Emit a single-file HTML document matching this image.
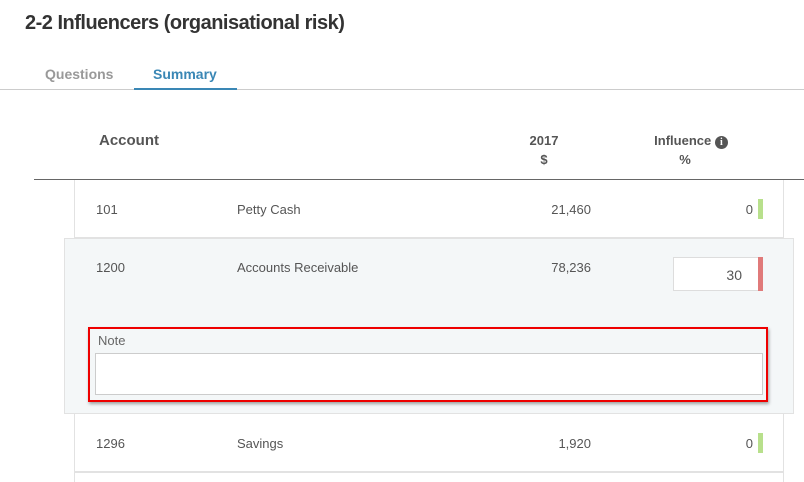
<!DOCTYPE html>
<html><head><style>
*{margin:0;padding:0;box-sizing:border-box}
body{width:804px;height:482px;overflow:hidden;background:#fff;font-family:"Liberation Sans",sans-serif;color:#555;position:relative}
.a{position:absolute}
</style></head><body>
<div class="a" style="left:25px;top:12px;font-size:20px;font-weight:bold;color:#333;letter-spacing:-0.5px">2-2 Influencers (organisational risk)</div>
<div class="a" style="left:45px;top:66px;font-size:14px;color:#999;font-weight:bold">Questions</div>
<div class="a" style="left:153px;top:66px;font-size:14px;color:#3a87b5;font-weight:bold">Summary</div>
<div class="a" style="left:0;top:89px;width:804px;height:1px;background:#ccc"></div>
<div class="a" style="left:134px;top:88px;width:103px;height:2px;background:#3a87b5"></div>
<div class="a" style="left:99px;top:132px;font-size:15px;font-weight:bold;color:#555">Account</div>
<div class="a" style="left:520px;top:131px;width:48px;text-align:center;font-size:13px;font-weight:bold;line-height:19px">2017<br>$</div>
<div class="a" style="left:646px;top:131px;width:90px;text-align:center;font-size:13px;font-weight:bold;line-height:19px">Influence <span style="display:inline-block;width:13px;height:13px;border-radius:50%;background:#555;color:#fff;font-size:10px;line-height:13px;vertical-align:0px;font-family:'Liberation Serif',serif">i</span><br><span style="margin-right:12px">%</span></div>
<div class="a" style="left:34px;top:179px;width:770px;height:1px;background:#666"></div>

<div class="a" style="left:74px;top:180px;width:710px;height:58px;border:1px solid #e2e2e2;border-top:none"></div>
<div class="a" style="left:96px;top:202px;font-size:13px">101</div>
<div class="a" style="left:237px;top:202px;font-size:13px">Petty Cash</div>
<div class="a" style="left:500px;top:202px;width:91px;text-align:right;font-size:13px">21,460</div>
<div class="a" style="left:700px;top:202px;width:53px;text-align:right;font-size:13px">0</div>
<div class="a" style="left:758px;top:199px;width:5px;height:20px;background:#b8e08c"></div>

<div class="a" style="left:64px;top:238px;width:730px;height:176px;background:#f4f7f8;border:1px solid #e2e2e2"></div>
<div class="a" style="left:96px;top:260px;font-size:13px">1200</div>
<div class="a" style="left:237px;top:260px;font-size:13px">Accounts Receivable</div>
<div class="a" style="left:500px;top:260px;width:91px;text-align:right;font-size:13px">78,236</div>
<div class="a" style="left:673px;top:257px;width:86px;height:34px;background:#fff;border:1px solid #ddd;font-size:14px;text-align:right;padding:9px 16px 0 0">30</div>
<div class="a" style="left:758px;top:257px;width:5px;height:34px;background:#e07a7a"></div>
<div class="a" style="left:88px;top:327px;width:680px;height:75px;border:2px solid #e00;box-shadow:1px 2px 3px rgba(0,0,0,.35)"></div>
<div class="a" style="left:98px;top:333px;font-size:13px;color:#666">Note</div>
<div class="a" style="left:95px;top:353px;width:668px;height:42px;background:#fff;border:1px solid #ccc"></div>

<div class="a" style="left:74px;top:414px;width:710px;height:58px;border:1px solid #e2e2e2;border-top:none"></div>
<div class="a" style="left:96px;top:436px;font-size:13px">1296</div>
<div class="a" style="left:237px;top:436px;font-size:13px">Savings</div>
<div class="a" style="left:500px;top:436px;width:91px;text-align:right;font-size:13px">1,920</div>
<div class="a" style="left:700px;top:436px;width:53px;text-align:right;font-size:13px">0</div>
<div class="a" style="left:758px;top:433px;width:5px;height:20px;background:#b8e08c"></div>
<div class="a" style="left:74px;top:471px;width:710px;height:2px;background:#e2e2e2"></div>
<div class="a" style="left:74px;top:473px;width:710px;height:9px;border-left:1px solid #e2e2e2;border-right:1px solid #e2e2e2"></div>
</body></html>
